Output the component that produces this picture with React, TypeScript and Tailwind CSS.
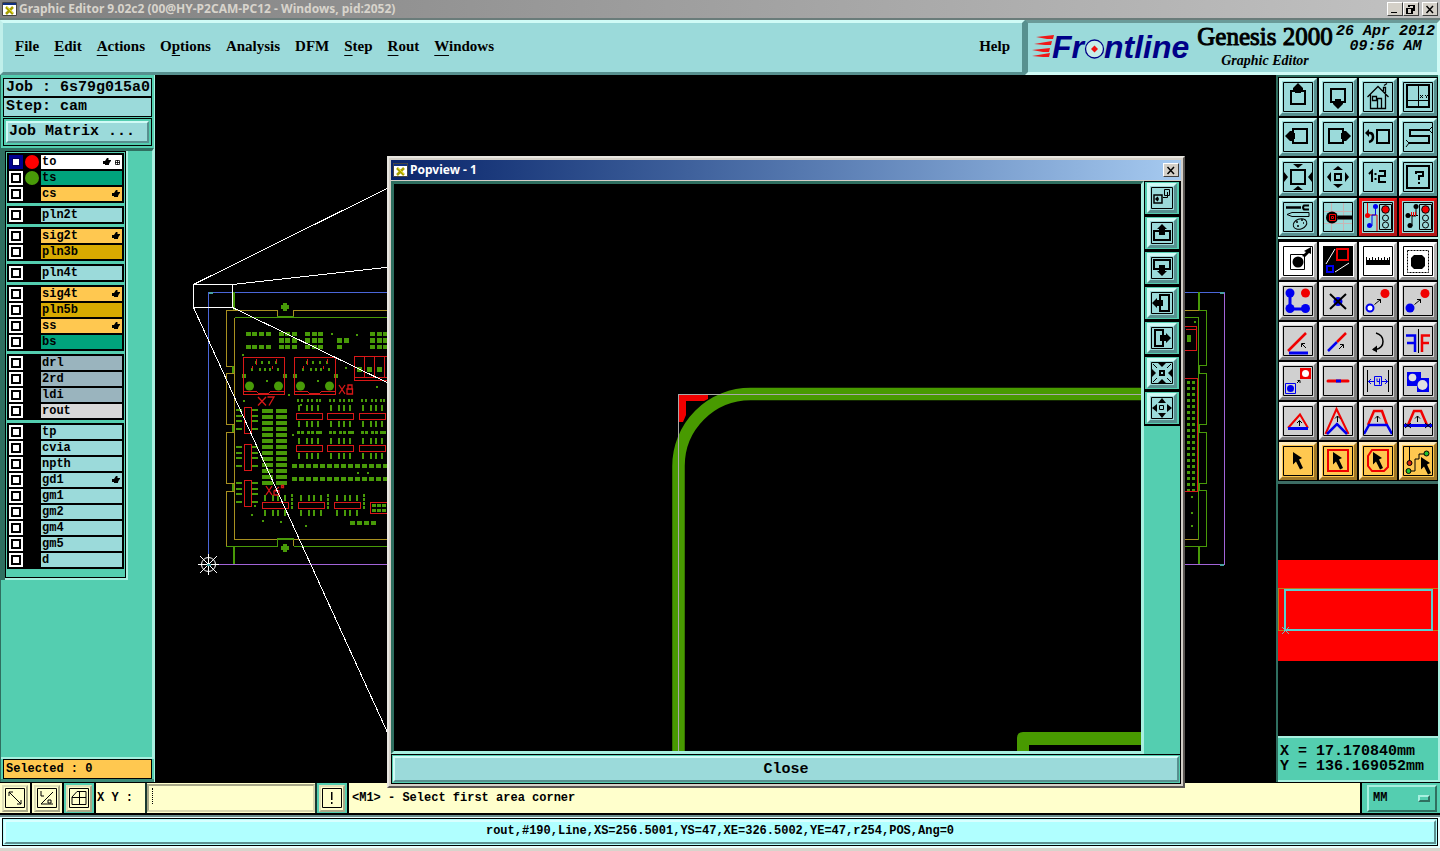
import React from 'react';

const MONO = "font-['Liberation_Mono',monospace] font-bold";
const SERIF = "font-['Liberation_Serif',serif]";
const UI = "font-['Noto_Sans',sans-serif]";

const AQUA = 'bg-[#9bdada] border-t-[#d0fbf6] border-l-[#d0fbf6] border-r-[#57908f] border-b-[#57908f]';
const RED = 'bg-[#9bdada] border-t-[#f01414] border-l-[#f01414] border-r-[#b01818] border-b-[#b01818]';
const WHITE = 'bg-white border-t-white border-l-white border-r-[#b4b4b4] border-b-[#8c8c8c]';
const GRAY = 'bg-[#d0d0d0] border-t-[#f4f4f4] border-l-[#f4f4f4] border-r-[#808080] border-b-[#808080]';
const ORANGE = 'bg-[#ffc850] border-t-[#ffeab8] border-l-[#ffeab8] border-r-[#a07828] border-b-[#a07828]';

type Tool = { name: string; tone: string; art: React.ReactNode };

const BLUE = '#0000f0';
const HOT = '#f00000';

const cursor = <path d="M10 6l9 6-3 1.500 4 8.500-3 1.500-4-8-3 3z" fill="#000" />;

const traffic = (
  <>
    <path d="M16.500 2.500h12v25h-12z" fill="none" stroke="#000" />
    <circle cx="22.500" cy="7.500" r="3.800" fill={HOT} stroke="#000" />
    <circle cx="22.500" cy="16" r="3" fill="none" stroke="#000" />
    <circle cx="22.500" cy="23" r="3" fill="none" stroke="#000" />
  </>
);

const viewTools: Tool[] = [
  { name: 'Pan up', tone: AQUA, art: <><path d="M8 9h14v13H8z" fill="none" stroke="#000" strokeWidth="2" /><path d="M15 1l5 5v2h-2v3h-6V8h-2V6z" /></> },
  { name: 'Pan down', tone: AQUA, art: <><path d="M8 7h14v13H8z" fill="none" stroke="#000" strokeWidth="2" /><path d="M15 27l-5-5v-2h2v-3h6v3h2v2z" /></> },
  {
    name: 'Home', tone: AQUA,
    art: (
      <>
        <path d="M4.500 15L15 4.500 25.500 15M7.500 12.500v14h15v-14M9.500 18.500v-4h4v4zM14.500 26v-9.500h4V26M20.500 9V5.500h2V11M21 3.500l3-2" fill="none" stroke="#000" strokeWidth="1.300" />
      </>
    ),
  },
  { name: 'Zoom by coordinates', tone: AQUA, art: <><path d="M4 3h22v22H4z" fill="none" stroke="#000" strokeWidth="2" /><path d="M15.500 3v22M4 18.500h22" stroke="#000" /><path d="M17 13l3 3m0-3l-3 3M22 13l1.500 1.500L25 13m-1.500 1.500V16" stroke="#000" fill="none" /></> },
  { name: 'Pan left', tone: AQUA, art: <><path d="M10 7h14v14H10z" fill="none" stroke="#000" strokeWidth="2" /><path d="M2 14l5-5h2v2h3v6H9v2H7z" /></> },
  { name: 'Pan right', tone: AQUA, art: <><path d="M6 7h14v14H6z" fill="none" stroke="#000" strokeWidth="2" /><path d="M28 14l-5-5h-2v2h-3v6h3v2h2z" /></> },
  { name: 'Previous view', tone: AQUA, art: <><path d="M14 8h12v13H14z" fill="none" stroke="#000" strokeWidth="2" /><path d="M4 11h3q3 0 3 4t-4 5" fill="none" stroke="#000" strokeWidth="2.500" /><path d="M2 11l4-4v8z" /></> },
  { name: 'Snake view', tone: AQUA, art: <><path d="M26 8H7v6h19v7H6" fill="none" stroke="#000" strokeWidth="2" /><path d="M29 5l-3 3 3 3M3 18l3 3-3 4" fill="none" stroke="#000" /></> },
  { name: 'Zoom out', tone: AQUA, art: <><path d="M8 8h14v14H8z" fill="none" stroke="#000" strokeWidth="2" /><path d="M10 2h10l-5 4zM10 28h10l-5-4zM1 10v10l4-5zM29 10v10l-4-5z" /></> },
  { name: 'Zoom in', tone: AQUA, art: <><path d="M12 12h6v6h-6z" fill="none" stroke="#000" strokeWidth="2" /><path d="M15 4l5 4H10zM15 26l5-4H10zM4 15l4-5v10zM26 15l-4-5v10z" /></> },
  { name: 'Actual scale', tone: AQUA, art: <path d="M6 12l3-3v11M16 9h6v5h-6v6h7M12.500 11v2M12.500 16v2" fill="none" stroke="#000" strokeWidth="2" /> },
  { name: 'Query', tone: AQUA, art: <><path d="M4 4h22v22H4z" fill="none" stroke="#000" strokeWidth="2" /><path d="M13 12v-2h7v4h-4v4M16 20v2" fill="none" stroke="#000" strokeWidth="2" /></> },
  { name: 'Preferences', tone: AQUA, art: <><path d="M3 5.500h15" stroke="#000" strokeWidth="2.500" /><path d="M26 3.500h-5q-2 2 0 4h5" stroke="#000" strokeWidth="2" fill="none" /><path d="M4 12.500l5-2h17v4H9z" fill="none" stroke="#000" /><ellipse cx="17" cy="22" rx="7" ry="5" transform="rotate(-20 17 22)" fill="none" stroke="#000" /><path d="M13 20h2M18 18h2M14 24h2M20 21h1" stroke="#000" strokeWidth="1.500" /></> },
  { name: 'Magnifier', tone: AQUA, art: <><path d="M8.500 1v28M20.500 1v28M1 9.500h28M1 21.500h28" stroke="#c8b4b4" /><circle cx="9" cy="15.500" r="6" /><path d="M15 15.500h14" stroke="#000" strokeWidth="4" /><path d="M8.500 14.500h2v2h-2zM6.500 12.500h6v6h-6z" fill="none" stroke={HOT} /></> },
  { name: 'Net check', tone: RED, art: <><path d="M4.500 1v12H14v16" fill="none" stroke={HOT} /><path d="M12.500 3v10H9v11H6" fill="none" stroke={BLUE} /><circle cx="4.500" cy="13.500" r="2.500" fill={HOT} /><circle cx="12.500" cy="4.500" r="2.500" fill={BLUE} /><circle cx="6.500" cy="23.500" r="2.500" fill={BLUE} />{traffic}</> },
  { name: 'Rules check', tone: RED, art: <><path d="M5 13.500h10M13 4v10H9v10H7" fill="none" stroke="#000" /><circle cx="5" cy="13.500" r="2.500" /><circle cx="13" cy="4.500" r="2.500" /><circle cx="7" cy="23.500" r="2.500" /><path d="M8.500 10v4M10.500 10v4M12.500 10v4" stroke={HOT} />{traffic}</> },
];

const editTools: Tool[] = [
  { name: 'Select feature', tone: WHITE, art: <><path d="M7.500 8.500h14v15h-14z" fill="none" stroke="#000" /><circle cx="15" cy="16" r="5.500" /><path d="M19 10l4-4-2-1 7-4v7l-2-1-4 4z" /></> },
  { name: 'Popview', tone: WHITE, art: <><path d="M0 0h30v30H0z" /><path d="M14 3h11v11H14z" fill="none" stroke={HOT} strokeWidth="2" /><path d="M4 20h6v6H4z" fill="none" stroke={BLUE} strokeWidth="2" /><path d="M3 18L12 3M12 26l14-9" stroke="#fff" /></> },
  { name: 'Measure', tone: WHITE, art: <path d="M3 11h1v3h2v-2h1v2h2v-3h1v3h2v-2h1v2h2v-3h1v3h2v-2h1v2h2v-3h1v3h2v-2h1v2h1v-3h1v8H3z" /> },
  { name: 'Area select', tone: WHITE, art: <><path d="M4.500 4.500h21v22h-21z" fill="none" stroke="#000" strokeDasharray="2 1" /><path d="M11 9h8l3 3v8l-3 3h-8l-3-3v-8z" /></> },
  { name: 'Connect pads', tone: GRAY, art: <><path d="M7 7v16h15" stroke={BLUE} strokeWidth="3" fill="none" /><circle cx="7" cy="7" r="4.500" fill={BLUE} /><circle cx="7" cy="22.500" r="4.500" fill={BLUE} /><circle cx="22.500" cy="22.500" r="4.500" fill={BLUE} /><circle cx="22.500" cy="7" r="4.500" fill={HOT} /></> },
  { name: 'Delete', tone: GRAY, art: <><circle cx="15" cy="15.500" r="4.500" fill={BLUE} /><path d="M7 8l16 15M23 8L7 23" stroke="#000" strokeWidth="2" /></> },
  { name: 'Move', tone: GRAY, art: <><circle cx="7" cy="22" r="3.500" fill="#fff" stroke={BLUE} strokeWidth="2" /><circle cx="22" cy="7.500" r="4.500" fill={HOT} /><path d="M11.500 18.500l6-5M14 13.500h3.500V17" stroke="#000" fill="none" /></> },
  { name: 'Copy', tone: GRAY, art: <><circle cx="7" cy="22" r="4.500" fill={BLUE} /><circle cx="22" cy="7.500" r="4.500" fill={HOT} /><path d="M11.500 18.500l6-5M14 13.500h3.500V17" stroke="#000" fill="none" /></> },
  { name: 'Rotate', tone: GRAY, art: <><path d="M5 25L23 7" stroke={HOT} strokeWidth="2.500" /><path d="M6 27h19" stroke={BLUE} strokeWidth="3" /><path d="M23 22l-4-4M18.500 21v-3.500H22" stroke="#000" fill="none" /></> },
  { name: 'Stretch', tone: GRAY, art: <><path d="M5 25L14 16" stroke={BLUE} strokeWidth="2.500" /><path d="M14 16l9-9" stroke={HOT} strokeWidth="2.500" /><path d="M16 23l4-4M17 18.500h3.500V22" stroke="#000" fill="none" /></> },
  { name: 'Turn', tone: GRAY, art: <><path d="M13 7q7 2 7 8.500T13 23.500h-3" fill="none" stroke="#000" strokeWidth="1.500" /><path d="M9 23.500l5-4v7z" /></> },
  { name: 'Mirror', tone: GRAY, art: <><path d="M15.500 3v24" stroke="#000" /><path d="M3 9.500h9V26M12 17H4" fill="none" stroke={BLUE} strokeWidth="2.500" /><path d="M27 9.500h-8V26M19 17h7" fill="none" stroke={HOT} strokeWidth="2.500" /></> },
  { name: 'Substitute', tone: GRAY, art: <><path d="M17 2h11v11H17z" fill={HOT} /><circle cx="22.500" cy="7.500" r="3.500" fill="#fff" /><path d="M2.500 17.500h10v10h-10z" fill="none" stroke={BLUE} /><circle cx="7.500" cy="22.500" r="3.500" fill={BLUE} /><path d="M14 17l3-3M14.500 14.500H17V17" stroke="#000" fill="none" /></> },
  { name: 'Break line', tone: GRAY, art: <><path d="M5 15h20" stroke={HOT} strokeWidth="3" strokeLinecap="round" /><path d="M13 15h5" stroke={BLUE} strokeWidth="3" /></> },
  { name: 'Spacing', tone: GRAY, art: <><path d="M4.500 4v22M25.500 4v22" stroke="#000" /><path d="M11.500 10.500h7v9h-7zM5 15.500h6M19 15.500h6M8 13l-2.500 2.500L8 18M22 13l2.500 2.500L22 18M14 12.500v3h2.500M16.500 12.500v6" fill="none" stroke={BLUE} /></> },
  { name: 'Merge', tone: GRAY, art: <><path d="M4 6h14v6h8v14H14v-6H4z" fill={BLUE} /><circle cx="9.500" cy="11.500" r="3.800" fill="#e0e0e0" /><circle cx="19.500" cy="19" r="5" fill="#e0e0e0" /></> },
  { name: 'Slide segment', tone: GRAY, art: <><path d="M5 22L17 8.500 25 22" fill="none" stroke={HOT} strokeWidth="2" /><path d="M5 22.500h20" stroke={BLUE} strokeWidth="3" /><path d="M16.500 20v-5M14 17l2.500-2.500L19 17" stroke="#000" fill="none" /></> },
  { name: 'Slide vertex', tone: GRAY, art: <><path d="M2.500 28L13.500 3l12 25" fill="none" stroke={HOT} strokeWidth="2" /><path d="M4 28l10-10 10 10" fill="none" stroke={BLUE} strokeWidth="2.500" /><path d="M14.500 16v-6M12 12.500l2.500-2.500 2.500 2.500" stroke="#000" fill="none" /></> },
  { name: 'Slide with neighbours', tone: GRAY, art: <><path d="M5 19l6-14h8l5 14" fill="none" stroke={HOT} strokeWidth="2.500" /><path d="M1 28l5-9h18l5 9" fill="none" stroke={BLUE} strokeWidth="2.500" /><path d="M14.500 16v-6M12 12.500l2.500-2.500 2.500 2.500" stroke="#000" fill="none" /></> },
  { name: 'Slide and trim', tone: GRAY, art: <><path d="M5 19l6-14h7l6 14" fill="none" stroke={HOT} strokeWidth="2.500" /><path d="M0 19.500h30" stroke={BLUE} strokeWidth="3" /><path d="M14.500 16v-6M12 12.500l2.500-2.500 2.500 2.500M2 17l6 5m0-5l-6 5M22 17l6 5m0-5l-6 5" stroke="#000" fill="none" /></> },
  { name: 'Select single', tone: ORANGE, art: cursor },
  { name: 'Select in frame', tone: ORANGE, art: <><path d="M5 4h20v21H5z" fill="none" stroke={HOT} strokeWidth="2" />{cursor}</> },
  { name: 'Select in polygon', tone: ORANGE, art: <><path d="M9 4h16v17l-4 4H9l-4-5V10z" fill="none" stroke={HOT} strokeWidth="2" />{cursor}</> },
  { name: 'Select net', tone: ORANGE, art: <><path d="M6.500 1v16M6 25h6V13h4V8h7" fill="none" stroke="#000" /><circle cx="6.500" cy="17" r="2.500" fill="#d02010" stroke="#000" /><circle cx="5.500" cy="25" r="2.500" fill="#20c030" stroke="#000" /><circle cx="23.500" cy="7.500" r="2.500" fill="#20c030" stroke="#000" /><g transform="translate(8 5)">{cursor}</g></> },
];

const popTools: Tool[] = [
  { name: 'Transfer view', tone: AQUA, art: <><path d="M3 8h8v8H3zM8 12H5m2-2l-2 2 2 2" fill="none" stroke="#000" strokeWidth="1.500" /><path d="M13.500 2.500h5v6h-5zM16.500 5v5.500H12" fill="none" stroke="#000" /></> },
  { name: 'Popview pan up', tone: AQUA, art: <><path d="M8 9H3v9h16V9h-5" fill="none" stroke="#000" strokeWidth="2" /><path d="M11 2l5 5h-2v6H8V7H6z" /></> },
  { name: 'Popview pan down', tone: AQUA, art: <><path d="M8 12H3V3h16v9h-5" fill="none" stroke="#000" strokeWidth="2" /><path d="M11 19l5-5h-2V8H8v6H6z" /></> },
  { name: 'Popview pan left', tone: AQUA, art: <><path d="M9 8V3h9v16H9v-5" fill="none" stroke="#000" strokeWidth="2" /><path d="M1 11l5-5v2h6v6H6v2z" /></> },
  { name: 'Popview pan right', tone: AQUA, art: <><path d="M12 8V3H4v16h8v-5" fill="none" stroke="#000" strokeWidth="2" /><path d="M20 11l-5-5v2H9v6h6v2z" /></> },
  { name: 'Popview zoom out', tone: AQUA, art: <><path d="M9 9h4v4H9z" fill="none" stroke="#000" strokeWidth="2" /><path d="M7 1h8l-4 4zM7 21h8l-4-4zM1 7v8l4-4zM21 7v8l-4-4z" /><path d="M2 2l4 4M20 2l-4 4M2 20l4-4M20 20l-4-4" stroke="#000" /></> },
  { name: 'Popview zoom in', tone: AQUA, art: <><path d="M8.500 8.500h4v4h-4z" fill="none" stroke="#000" /><path d="M11 1l4 5H7zM11 21l4-5H7zM1 11l5-4v8zM21 11l-5-4v8z" /></> },
];

function ToolButton({ tool }: { tool: Tool }) {
  return (
    <button type="button" aria-label={tool.name} className={`flex size-[38px] items-center justify-center border-3 ${tool.tone}`}>
      <svg width="30" height="30" viewBox="0 0 30 30">
        {tool.art}
        <path d="M.5.5h29v29H.5z" fill="none" stroke="#000" />
      </svg>
    </button>
  );
}

type Layer = { name: string; fill: string; dot?: string; hand?: boolean; grid?: boolean };
const A = 'bg-[#9bdada]';
const G = 'bg-[#00a47c]';
const O = 'bg-[#ffc850]';
const D = 'bg-[#d8aa00]';
const S = 'bg-[#9ab4be]';

const layerGroups: Layer[][] = [
  [{ name: 'to', fill: 'bg-white', dot: 'bg-[#ff0000]', hand: true, grid: true }, { name: 'ts', fill: G, dot: 'bg-[#489a08]' }, { name: 'cs', fill: O, hand: true }],
  [{ name: 'pln2t', fill: A }],
  [{ name: 'sig2t', fill: O, hand: true }, { name: 'pln3b', fill: D }],
  [{ name: 'pln4t', fill: A }],
  [{ name: 'sig4t', fill: O, hand: true }, { name: 'pln5b', fill: D }, { name: 'ss', fill: O, hand: true }, { name: 'bs', fill: G }],
  [{ name: 'drl', fill: S }, { name: '2rd', fill: S }, { name: 'ldi', fill: S }, { name: 'rout', fill: 'bg-[#d8d8d8]' }],
  [
    { name: 'tp', fill: A }, { name: 'cvia', fill: A }, { name: 'npth', fill: A }, { name: 'gd1', fill: A, hand: true }, { name: 'gm1', fill: A },
    { name: 'gm2', fill: A }, { name: 'gm4', fill: A }, { name: 'gm5', fill: A }, { name: 'd', fill: A },
  ],
];

function LayerRow({ layer }: { layer: Layer }) {
  const ring = layer.grid
    ? 'shadow-[inset_0_0_0_3px_#000090,inset_0_0_0_4px_#000060]'
    : 'shadow-[inset_0_0_0_2px_#fff,inset_0_0_0_4px_#000]';
  return (
    <label className="flex h-[14px] items-center">
      <input type="checkbox" className={`m-0 size-[14px] shrink-0 appearance-none bg-white ${ring}`} />
      <span className="flex w-[18px] shrink-0 items-center justify-center">
        {layer.dot && <span className={`size-[14px] rounded-full ${layer.dot}`} />}
      </span>
      <span className={`flex h-[14px] flex-1 items-center gap-1 pr-[2px] pl-px text-[12px] leading-[14px] ${layer.fill}`}>
        <span className="flex-1">{layer.name}</span>
        {layer.hand && (
          <svg width="8" height="8" viewBox="0 0 8 8"><path d="M4 0h1.500v2H8v1.500H7v1H6.500v1H6V7H2V6H0V3h2z" /></svg>
        )}
        {layer.grid && (
          <svg width="5" height="5" viewBox="0 0 5 5"><path d="M.5.5h4v4h-4zM2.500 0v5M0 2.500h5" fill="none" stroke="#000" strokeWidth=".8" /></svg>
        )}
      </span>
    </label>
  );
}

function LeftPanel() {
  return (
    <aside className={`flex w-[155px] shrink-0 flex-col border-x border-l-[#2f6f60] border-r-[#a8f0e0] bg-[#54ceb0] ${MONO}`}>
      <div className="flex flex-col border-t-3 border-[#54ceb0] px-[2px] text-[15px]">
        <div className="h-[19px] border border-black bg-[#9bdada] px-[2px] leading-[17px] whitespace-nowrap">Job : 6s79g015a0</div>
        <div className="h-[20px] border border-black bg-[#9bdada] px-[2px] leading-[18px] whitespace-nowrap">Step: cam</div>
        <div className="mt-px h-[28px] border border-black p-[2px]">
          <button type="button" className="h-full w-full border-2 border-t-[#d0fbf6] border-r-[#57908f] border-b-[#57908f] border-l-[#d0fbf6] bg-[#9bdada] px-px text-left leading-[18px]">
            Job Matrix ...
          </button>
        </div>
      </div>
      <div className="mt-[2px] flex flex-1 flex-col border-t-3 border-r-2 border-t-[#2f6f60] border-r-[#a8f0e0]">
        <div className="mb-auto w-[127px] border-l-4 border-l-[#2f6f60]">
          <div className="border-r-2 border-b-2 border-[#a8f0e0]">
            <div className="flex flex-col gap-[3px] border border-black px-px pt-px pb-[8px]">
              {layerGroups.map((group, i) => (
                <div key={i} className="flex flex-col gap-[2px] bg-black p-[2px]">
                  {group.map((layer) => <LayerRow key={layer.name} layer={layer} />)}
                </div>
              ))}
            </div>
          </div>
        </div>
      </div>
      <div className="border-t-2 border-b-3 border-t-[#a8f0e0] border-b-[#3a8a78] px-[2px]">
        <div className="h-[20px] border border-black bg-[#ffc850] px-[2px] text-[12px] leading-[18px]">Selected : 0</div>
      </div>
    </aside>
  );
}

const PAD = '#489a08';
const MARK = '#d81818';

const pads: number[][] = [];
const pad = (x: number, y: number, w: number, h: number) => pads.push([x, y, w, h]);
[246, 252, 259, 266].forEach((x) => { pad(x, 332, 5, 4); pad(x, 345, 5, 4); });
[279, 285, 292, 305, 312, 318, 370, 377, 383].forEach((x) => { pad(x, 332, 5, 4); pad(x, 338, 5, 5); pad(x, 345, 5, 4); });
pad(337, 338, 5, 5); pad(344, 338, 5, 5); pad(337, 345, 5, 4);
[243, 294].forEach((x) => {
  [12, 18, 25, 32].forEach((d) => pad(x + d, 361, 2, 3));
  [8, 16, 21, 26, 34].forEach((d) => pad(x + d, 368, 2, 3));
  pad(x - 1, 374, 4, 4); pad(x + 40, 374, 4, 4); pad(x + 23, 380, 2, 2);
});
[357, 367, 377].forEach((x) => pad(x, 367, 5, 5));
[297, 329, 361].forEach((x) => {
  [0, 4, 10, 14, 19, 22].forEach((d) => { pad(x + d, 399, 2, 3); pad(x + d, 431, 3, 3); });
  [1, 9, 14, 20].forEach((d) => {
    pad(x + d, 405, 2, 6); pad(x + d, 421, 2, 6); pad(x + d, 438, 2, 6); pad(x + d, 453, 2, 6);
  });
});
for (let x = 292; x < 386; x += 7) { pad(x, 464, 5, 4); pad(x, 477, 5, 4); }
[264, 300, 336].forEach((x) => {
  [0, 8, 13, 20].forEach((d) => { pad(x + d, 495, 2, 6); pad(x + d, 510, 2, 6); });
  [494, 498, 502, 506].forEach((y) => pad(x + 27, y, 2, 3));
});
[372, 377, 382].forEach((x) => { pad(x, 504, 4, 3); pad(x, 509, 4, 3); });
[350, 357, 364, 371].forEach((x) => pad(x, 521, 5, 4));
for (let y = 409; y < 484; y += 6) { pad(262, y, 11, 4); pad(276, y, 11, 4); }
[407, 444, 480].forEach((y) => {
  [2, 8, 13, 21].forEach((d) => { pad(236, y + d, 6, 2); pad(252, y + d, 6, 2); });
});
for (let y = 381; y < 490; y += 6) { pad(1187, y, 3, 3); pad(1192, y, 3, 3); }
[[331, 333], [356, 334], [242, 354], [345, 367], [376, 386], [243, 400], [288, 394], [292, 434], [357, 472], [367, 472], [254, 505], [251, 514], [262, 520], [280, 521], [305, 525], [300, 404], [1194, 321], [1191, 496], [1191, 512], [1191, 525]].forEach(([x, y]) => pad(x, y, 2, 2));
pad(1187, 335, 4, 7);

const chips: number[][] = [
  ...[296, 327, 359].flatMap((x) => [[x, 413, 26, 6], [x, 445, 26, 6]]),
  [262, 502, 26, 6], [298, 502, 26, 6], [334, 502, 26, 6], [370, 502, 26, 11],
  [244, 407, 7, 26], [244, 444, 7, 26], [244, 480, 7, 26],
  [1180, 326, 16, 24], [1180, 378, 17, 113],
];

function Board() {
  return (
    <svg width="1121" height="707" viewBox="155 75 1121 707" className="block" shapeRendering="crispEdges" aria-label="Board layout">
      <g fill="none" strokeWidth="1">
        <path d="M208.500 564.500v-272h1016" stroke="#4a66d8" />
        <path d="M208.500 564.500h1016v-272" stroke="#a264d8" />
        <path d="M234 366.500h-8v-56h51v7h16v-7h906M234 424.500h-8v-51h8M234 483.500h-8v-51h8M226.500 546v-55h8M234.500 318v221.500h43M293.500 546v-6.500h905" stroke="#a89020" />
        <path d="M234.500 317.500h964v222M277.500 540v6.500H226M293.500 546.500H1206.500v-56h-8M1198.500 483.500h8v-51h-8M1198.500 424.500h8v-51h-8M1198.500 365.500h8v-55h-8" stroke={PAD} />
      </g>
      <g stroke={PAD} strokeWidth="2">
        <path d="M277 317h17M277 539h17M234 292v18M234 546v18M1199 292v18M1199 546v18M233 366v7M233 425v7M233 484v7M1199 365v8M1199 425v7M1199 484v6" />
        <path d="M285 303v8M281 307h8M285 544v8M281 548h8" strokeWidth="4" />
      </g>
      {pads.map(([x, y, w, h], i) => <rect key={i} x={x} y={y} width={w} height={h} fill={PAD} />)}
      <g fill="none" stroke={MARK}>
        {chips.map(([x, y, w, h], i) => <rect key={i} x={x + 0.5} y={y + 0.5} width={w} height={h} />)}
        {[243, 294].map((x) => (
          <g key={x}>
            <path d={`M${x + 0.5} 357.500h41v37h-41zM${x} 391.500h13l3 2h9l3-2h13M${x + 13} 359v6M${x + 33} 359v4M${x + 9} 366v3M${x + 29} 366v3`} />
          </g>
        ))}
        <path d="M354.500 356.500h34v24h-34zM354 377.500h34M364.500 357v20M374.500 357v20M384.500 357v20M1186 329.500h10" />
        <g shapeRendering="auto" strokeWidth="1.300">
          <path d="M258 397l8 8.500m0-8.500l-8 8.500M267.500 397h6.500l-5 8.500M339 385l6 9m0-9l-6 9M348 385h4v4h-4zM347 389h5.500v5H347zM266 486l6 9m0-9l-6 9M279 487l-5 4v4h5v-4h-4M281.500 485.500h2v2h-2z" />
        </g>
      </g>
      <g fill={PAD} shapeRendering="auto">
        {[249.5, 278.5, 300.5, 329.5].map((x) => <circle key={x} cx={x} cy="386" r="4.500" />)}
      </g>
      <g fill="none" stroke="#fff">
        <path d="M193.500 284.500h39v23h-39zM193.500 284.500L390 187M232.500 284.500L390 267M232.500 307.500L390 384M193.500 307.500L390 738" />
        <circle cx="208.500" cy="564.500" r="7" shapeRendering="auto" />
        <path d="M198 564.500h21M208.500 554v21M200 556l17 17M217 556l-17 17" />
      </g>
      <path d="M207 564.500h4M209 292.500h4M1220 292.500h4M1220 564.500h4" stroke="#48a0a0" strokeWidth="2" />
    </svg>
  );
}

function AppIcon() {
  return (
    <svg width="15" height="14" viewBox="0 0 15 14" className="shrink-0">
      <path d="M.5.5h14v13H.5z" fill="#fff" stroke="#444" />
      <path d="M1 1h13v2H1z" fill="#103080" />
      <path d="M4 5l7 7M11 5l-7 7" stroke="#a8a000" strokeWidth="2.500" />
      <path d="M5 5l6 6" stroke="#e8e020" />
    </svg>
  );
}

function WindowButton({ label, d }: { label: string; d: string }) {
  return (
    <button type="button" aria-label={label} className="flex h-[14px] w-4 items-center justify-center border border-t-white border-r-[#404040] border-b-[#404040] border-l-white bg-[#d4d0c8]">
      <svg width="12" height="11" viewBox="0 0 12 11" shapeRendering={label === 'Close' ? 'auto' : 'crispEdges'}><path d={d} fill="none" stroke="#000" strokeWidth="1.500" /></svg>
    </button>
  );
}

const CROSS = 'M2.500 2l6.500 7M9 2L2.500 9';

function Popview() {
  return (
    <section aria-label="Popview - 1" className="absolute top-[81px] left-[232px] z-10 flex h-[632px] w-[798px] flex-col border-2 border-t-[#e8e6e0] border-r-[#5c5854] border-b-[#5c5854] border-l-[#e8e6e0] bg-[#d4d0c8] p-[2px]">
      <header className={`flex h-[20px] shrink-0 items-center gap-[2px] bg-linear-to-r from-[#0a246a] to-[#a6caf0] pr-[2px] pl-[2px] text-[12px] font-bold text-white ${UI}`}>
        <AppIcon />
        <span className="flex-1">Popview - 1</span>
        <WindowButton label="Close" d={CROSS} />
      </header>
      <div className="mt-px flex min-h-0 flex-1">
        <div className="min-w-0 flex-1 overflow-hidden border-3 border-t-[#2f6f60] border-r-[#a8f0e0] border-b-[#a8f0e0] border-l-[#2f6f60] bg-black">
          <svg width="748" height="567" viewBox="394 184 748 567" className="block" aria-label="Magnified corner">
            <path d="M679 394h29v5l-4 2h-18v14l-3 7h-4z" fill="#f00000" />
            <path d="M678.500 751V466A72 72 0 0 1 750.500 394H1142" fill="none" stroke="#489a00" strokeWidth="12.500" />
            <path d="M678.500 751V394.500H1142" fill="none" stroke="#a8a8a8" shapeRendering="crispEdges" />
            <path d="M1017 751v-13q0-6 6-6h119v13H1029v6z" fill="#489a00" />
          </svg>
        </div>
        <div className="w-[37px] shrink-0 border-r border-black bg-[#54ceb0]">
          {popTools.map((tool) => (
            <div key={tool.name} className="flex h-[35px] items-center justify-center border border-b-2 border-black">
              <button type="button" aria-label={tool.name} className={`flex size-[30px] items-center justify-center border-3 ${tool.tone}`}>
                <svg width="22" height="22" viewBox="0 0 22 22" className="shrink-0">
                  {tool.art}
                  <path d="M.5.5h21v21H.5z" fill="none" stroke="#000" />
                </svg>
              </button>
            </div>
          ))}
        </div>
      </div>
      <div className="h-[30px] shrink-0 border border-black bg-[#54ceb0] p-px">
        <button type="button" className={`block h-full w-full border-2 border-t-[#d0fbf6] border-r-[#57908f] border-b-[#57908f] border-l-[#d0fbf6] bg-[#9bdada] pt-px text-[15px] leading-[20px] ${MONO}`}>Close</button>
      </div>
    </section>
  );
}

function RightPanel() {
  return (
    <aside className="flex w-[164px] shrink-0 flex-col border-x-2 border-l-[#2f6f60] border-r-[#a8f0e0] bg-black">
      <div className="grid grid-cols-4 gap-[2px] border-t-2 border-b-2 border-t-[#2f6f60] border-b-[#c0f0e8] px-px py-px">
        {viewTools.map((tool) => <ToolButton key={tool.name} tool={tool} />)}
      </div>
      <div className="grid grid-cols-4 gap-[2px] border-b-3 border-b-[#3c6c64] px-px pt-[3px] pb-px">
        {editTools.map((tool) => <ToolButton key={tool.name} tool={tool} />)}
      </div>
      <div className="flex flex-1 items-center">
        <svg width="160" height="101" viewBox="0 0 160 101" className="block" aria-label="Overview" shapeRendering="crispEdges">
          <path d="M0 0h160v101H0z" fill="#ff0000" />
          <path d="M160 28.500H.5v42H160" fill="none" stroke="#c07818" />
          <path d="M7 30h147v40H7z" fill="none" stroke="#58d0d0" strokeWidth="2" />
          <path d="M4 67l7 7m0-7l-7 7" fill="none" stroke="#78b8b8" />
        </svg>
      </div>
      <div className={`border-y-2 border-t-[#a8f0e0] border-b-[#a8f0e0] bg-[#54ceb0] px-[2px] pt-[6px] pb-[6px] text-[15px] leading-[15px] whitespace-pre ${MONO}`}>
        <div>X = 17.170840mm</div>
        <div>Y = 136.169052mm</div>
      </div>
    </aside>
  );
}

const menus: [string, string, string][] = [
  ['', 'F', 'ile'], ['', 'E', 'dit'], ['', 'A', 'ctions'], ['O', 'p', 'tions'], ['Analysis', '', ''],
  ['DFM', '', ''], ['', 'S', 'tep'], ['', 'R', 'out'], ['', 'W', 'indows'],
];

function Logo() {
  return (
    <svg width="164" height="46" viewBox="1031 25 164 46" className="shrink-0" aria-label="Frontline">
      <g fill="#f01818">
        <path d="M1037 37l18-2-1 4h-6zM1035 44l18-3-1 4h-6zM1033 50l18-2-1 4h-6zM1033 56l18-3-1 4h-6z" />
      </g>
      <g fill="#000088" fontFamily="Liberation Sans, sans-serif" fontWeight="700" fontStyle="italic" fontSize="32">
        <text x="1053" y="58">Fr</text>
        <text x="1105" y="58">ntline</text>
      </g>
      <circle cx="1095.500" cy="49" r="9" fill="#c8ece8" stroke="#000088" strokeWidth="1.300" />
      <path d="M1095.500 45.500l3.500 3.500-3.500 3.500-3.500-3.500z" fill="#f01010" />
    </svg>
  );
}

function CornerTool({ label, d, active }: { label: string; d: string; active?: boolean }) {
  return (
    <div className={`flex w-[32px] items-center justify-center border-r-2 border-black ${active ? 'bg-[#54ceb0]' : 'bg-[#ffffcc]'}`}>
      <button type="button" aria-label={label} className="flex h-[27px] w-[26px] items-center justify-center border-2 border-t-[#e0e0b8] border-r-[#a8a888] border-b-[#a8a888] border-l-[#e0e0b8] bg-[#ffffcc]">
        <svg width="20" height="20" viewBox="0 0 20 20" className="shrink-0"><path d="M.5.5h19v19H.5z" fill="none" stroke="#000" /><path d={d} fill="none" stroke="#000" /></svg>
      </button>
    </div>
  );
}

export default function App() {
  return (
    <div className="flex min-h-screen flex-col bg-black text-black">
      <header className={`flex h-[18px] shrink-0 items-center gap-[2px] bg-linear-to-r from-[#808080] to-[#c2c2c2] pr-[2px] pl-[2px] text-[12px] font-bold text-[#d8d4cc] ${UI}`}>
        <AppIcon />
        <span className="flex-1">Graphic Editor 9.02c2 (00@HY-P2CAM-PC12 - Windows, pid:2052)</span>
        <div className="flex">
          <WindowButton label="Minimize" d="M2 8.500h6" />
          <WindowButton label="Restore" d="M4 3V1.500h5v5H7M2 4.500h5v5H2z" />
          <span className="w-[3px]" />
          <WindowButton label="Close" d={CROSS} />
        </div>
      </header>

      <div className="flex h-[57px] shrink-0 border-t-2 border-t-[#6a7c7a] bg-[#9bdada]">
        <nav className={`flex min-w-0 flex-1 items-center gap-[15px] border-3 border-t-[#d0fbf6] border-r-[#57908f] border-b-[#57908f] border-l-[#c0efea] px-[12px] pb-[2px] text-[15px] font-bold ${SERIF}`}>
          {menus.map(([pre, key, post]) => (
            <button key={pre + key + post} type="button">
              {pre}<span className="underline underline-offset-4">{key}</span>{post}
            </button>
          ))}
          <button type="button" className="ml-auto">Help</button>
        </nav>
        <div className="flex w-[415px] shrink-0 items-center border-3 border-t-[#6a9a98] border-r-[#d0fbf6] border-b-[#d0fbf6] border-l-[#57908f] pl-[2px]">
          <Logo />
          <div className={`flex flex-1 flex-col items-center pb-[2px] whitespace-nowrap ${SERIF}`}>
            <span className="text-[25px] leading-[29px] [-webkit-text-stroke:1px_black]">Genesis 2000</span>
            <span className="text-[14px] leading-[20px] font-bold italic">Graphic Editor</span>
          </div>
          <div className={`flex flex-col items-center self-start pt-px pr-[2px] text-[15px] leading-[15px] whitespace-nowrap italic ${MONO}`}>
            <span>26 Apr 2012</span>
            <span>09:56 AM</span>
          </div>
        </div>
      </div>

      <main className="flex flex-1">
        <LeftPanel />
        <div className="relative min-w-0 flex-1">
          <Board />
          <Popview />
        </div>
        <RightPanel />
      </main>

      <div className={`flex h-[33px] shrink-0 border-t border-b-2 border-black bg-[#ffffcc] text-[12px] ${MONO}`}>
        <CornerTool label="Snap mode" d="M4 4l12 12M4 8V4h4M16 12v4h-4" />
        <CornerTool label="Angle mode" d="M4 3v5h3M16 4L4 16h12M11 12h3v3h-3z" />
        <CornerTool label="Grid mode" d="M3 16.500h14v-13H8L3 9zM10.500 3v13M3 9.500h14" active />
        <label htmlFor="xy" className="flex w-[49px] items-center pl-px whitespace-nowrap">X Y :</label>
        <div className="border-x-2 border-[#183830] py-px">
          <div className="flex h-full w-[168px] border-2 border-t-[#a8a888] border-r-[#d8d8b0] border-b-[#d8d8b0] border-l-[#a8a888] bg-[#ffffcc] pl-[3px]">
            <span className="my-[2px] h-[16px] border-l border-dotted border-black" />
            <input id="xy" className="min-w-0 flex-1 bg-transparent outline-none" />
          </div>
        </div>
        <CornerTool label="Alert" d="M10 4v8M10 14v2M9.500 4v8M9.500 14v2" active />
        <div className="flex min-w-0 flex-1 items-center pl-[3px]">&lt;M1&gt; - Select first area corner</div>
        <div className="flex w-[80px] items-center justify-center border-l-2 border-black bg-[#54ceb0] pl-[2px]">
          <div className="flex h-[27px] w-[70px] items-center border-2 border-t-[#a8f0e0] border-r-[#2f6f60] border-b-[#2f6f60] border-l-[#a8f0e0] pr-[5px]">
            <select aria-label="Units" className="min-w-0 flex-1 appearance-none bg-transparent pl-1 outline-none">
              <option>MM</option>
            </select>
            <span className="h-[7px] w-[12px] border-2 border-t-[#a8f0e0] border-r-[#2f6f60] border-b-[#2f6f60] border-l-[#a8f0e0]" />
          </div>
        </div>
      </div>

      <footer className={`h-[36px] shrink-0 border-t-2 border-b-3 border-t-[#6a8c8c] border-b-[#d8d4cc] bg-[#e8ffff] px-[2px] pt-px text-[12px] ${MONO}`}>
        <div className="h-[28px] border border-black bg-[#b0ffff] p-px">
          <div className="h-full border-2 border-t-[#d8ffff] border-r-[#5c9090] border-b-[#5c9090] border-l-[#d8ffff] text-center leading-[18px] whitespace-nowrap">
            rout,#190,Line,XS=256.5001,YS=47,XE=326.5002,YE=47,r254,POS,Ang=0
          </div>
        </div>
      </footer>
    </div>
  );
}
